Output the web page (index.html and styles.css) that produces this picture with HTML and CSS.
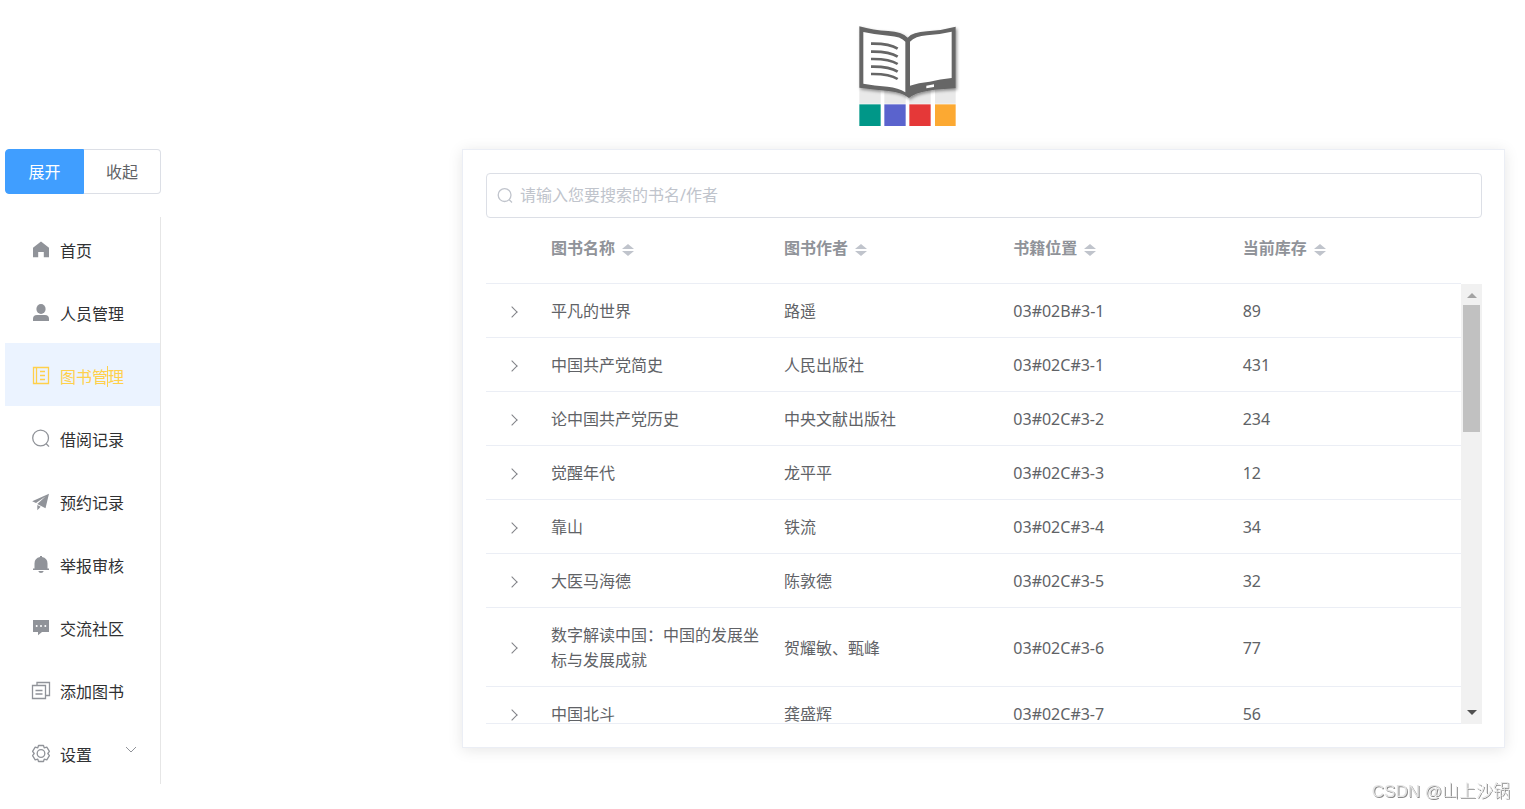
FILE: index.html
```html
<!DOCTYPE html>
<html lang="zh-CN">
<head>
<meta charset="utf-8">
<title>图书管理</title>
<link rel="stylesheet" href="styles.css">
</head>
<body>
<div class="layout">
  <aside class="sidebar">
    <div class="toggle" role="radiogroup" aria-label="菜单">
      <label class="toggle-item"><input type="radio" name="collapse" checked><span>展开</span></label>
      <label class="toggle-item"><input type="radio" name="collapse"><span>收起</span></label>
    </div>
    <nav class="menu">
      <a class="menu-item" href="#">
        <svg class="icon" viewBox="0 0 20 20"><path fill="currentColor" d="M10 1.5 18 7.8V17.3H12.8V12H7.2V17.3H2V7.8Z"/></svg>
        <span class="menu-text">首页</span>
      </a>
      <a class="menu-item" href="#">
        <svg class="icon" viewBox="0 0 20 20"><ellipse fill="currentColor" cx="10" cy="6" rx="4.6" ry="5"/><path fill="currentColor" d="M2 18V15.8Q2 12 6 12H14Q18 12 18 15.8V18Z"/></svg>
        <span class="menu-text">人员管理</span>
      </a>
      <a class="menu-item active" href="#" aria-current="page">
        <svg class="icon" viewBox="0 0 20 20" fill="none" stroke="currentColor"><path d="M2.5 1.5H17.5V17.5H2.5ZM5.5 1.5V17.5M9 5.5H14M9 9.5H14M9 13.5H14" stroke-width="1.3"/></svg>
        <span class="menu-text">图书管理</span>
      </a>
      <a class="menu-item" href="#">
        <svg class="icon" viewBox="0 0 20 20" fill="none" stroke="currentColor" stroke-width="1.3"><circle cx="9.6" cy="9" r="7.9"/><path d="M15 14.5 18 17.6"/></svg>
        <span class="menu-text">借阅记录</span>
      </a>
      <a class="menu-item" href="#">
        <svg class="icon" viewBox="0 0 20 20" fill="currentColor"><path d="M18 1.8 1.2 9.2 5 11 14.5 4.6 6.3 12 14.5 16.2ZM6.3 13V18.3L9.7 14.7Z"/></svg>
        <span class="menu-text">预约记录</span>
      </a>
      <a class="menu-item" href="#">
        <svg class="icon" viewBox="0 0 20 20" fill="currentColor"><path d="M9 2V1H11V2Q16.5 3 16.5 8.5V13.6H18V15H2V13.6H3.5V8.5Q3.5 3 9 2ZM7.3 16H12.7Q12.3 18 10 18 7.7 18 7.3 16Z"/></svg>
        <span class="menu-text">举报审核</span>
      </a>
      <a class="menu-item" href="#">
        <svg class="icon" viewBox="0 0 20 20"><path fill="currentColor" d="M2 2H18V14H11L7 17.2V14H2Z"/><g fill="#fff"><circle cx="5.7" cy="8" r="1"/><circle cx="10" cy="8" r="1"/><circle cx="14.3" cy="8" r="1"/></g></svg>
        <span class="menu-text">交流社区</span>
      </a>
      <a class="menu-item" href="#">
        <svg class="icon" viewBox="0 0 20 20" fill="none" stroke="currentColor" stroke-width="1.3"><path d="M1.5 4.5H14.5V17.5H1.5ZM6 4V1.5H18.5V14.5H15M4.5 9.5H11.5M4.5 13H11.5"/></svg>
        <span class="menu-text">添加图书</span>
      </a>
      <a class="menu-item" href="#">
        <svg class="icon" viewBox="0 0 20 20" fill="none" stroke="currentColor" stroke-width="1.3"><circle cx="10" cy="9.5" r="3.8"/><path d="M7.5 1.5H12.5L13.2 3.8 15.8 3.2 18.4 7.4 16.8 9.5 18.4 11.6 15.8 15.8 13.2 15.2 12.5 17.5H7.5L6.8 15.2 4.2 15.8 1.6 11.6 3.2 9.5 1.6 7.4 4.2 3.2 6.8 3.8Z" stroke-linejoin="round"/></svg>
        <span class="menu-text">设置</span>
        <svg class="chevron" viewBox="0 0 12 8" fill="none" stroke="currentColor"><path d="M1 1 6 6 11 1"/></svg>
      </a>
    </nav>
  </aside>
  <main class="main">
    <header class="brand">
      <svg class="logo" viewBox="48 36 312 318" role="img" aria-label="图书馆">
        <defs><filter id="shade" x="-10%" y="-10%" width="120%" height="125%"><feDropShadow dx="4" dy="5" stdDeviation="4" flood-color="#000" flood-opacity=".4"/></filter></defs>
        <path fill="#e9e9e9" d="M58 230H122V281H58ZM133 230H197V281H133ZM208 230H272V281H208ZM285 230H347V281H285Z"/>
        <path fill="#009788" d="M58 283H122V348H58Z"/>
        <path fill="#5a63cd" d="M133 283H197V348H133Z"/>
        <path fill="#e53838" d="M208 283H272V348H208Z"/>
        <path fill="#fca932" d="M285 283H347V348H285Z"/>
        <path fill="#666" filter="url(#shade)" d="M58 49Q100 61 145 63 186 65 203 83 218 66 261 64 306 61 347 50V235Q300 237 266 242 225 248 207 264 188 247 145 243 100 239 58 233Z"/>
        <path fill="#fff" d="M70 66Q105 74 146 77 183 79 196 95V247Q175 233 143 230 102 227 70 221ZM210 95Q225 79 261 76 300 73 335 65V204Q300 208 269 215 235 218 210 227Z"/>
        <path fill="#fff" d="M259 227 282 223V231L259 235Z"/>
        <g fill="none" stroke="#666" stroke-width="8"><path d="M93 101Q148 100 173 116M93 125Q148 124 173 140M93 147Q148 146 173 162M93 170Q148 169 173 185M93 192Q148 191 173 207"/></g>
      </svg>
    </header>
    <section class="card">
      <div class="search">
        <svg class="search-icon" viewBox="0 0 16 16" fill="none" stroke="currentColor" stroke-width="1.3"><circle cx="7.6" cy="7.1" r="6.4"/><path d="M12 11.5 15 14.5"/></svg>
        <input class="search-input" type="text" aria-label="搜索" placeholder="请输入您要搜索的书名/作者">
      </div>
      <div class="table-head">
        <table class="grid">
          <colgroup><col class="col-expand"><col class="col-name"><col><col><col></colgroup>
          <thead>
            <tr>
              <th></th>
              <th><div class="head-cell">图书名称<span class="sort"></span></div></th>
              <th><div class="head-cell">图书作者<span class="sort"></span></div></th>
              <th><div class="head-cell">书籍位置<span class="sort"></span></div></th>
              <th><div class="head-cell">当前库存<span class="sort"></span></div></th>
            </tr>
          </thead>
        </table>
      </div>
      <div class="table-body">
        <div class="viewport">
          <table class="grid">
            <colgroup><col class="col-expand"><col class="col-name"><col><col><col></colgroup>
            <tbody>
              <tr><td><button class="expand" aria-label="展开行"></button></td><td>平凡的世界</td><td>路遥</td><td>03#02B#3-1</td><td>89</td></tr>
              <tr><td><button class="expand" aria-label="展开行"></button></td><td>中国共产党简史</td><td>人民出版社</td><td>03#02C#3-1</td><td>431</td></tr>
              <tr><td><button class="expand" aria-label="展开行"></button></td><td>论中国共产党历史</td><td>中央文献出版社</td><td>03#02C#3-2</td><td>234</td></tr>
              <tr><td><button class="expand" aria-label="展开行"></button></td><td>觉醒年代</td><td>龙平平</td><td>03#02C#3-3</td><td>12</td></tr>
              <tr><td><button class="expand" aria-label="展开行"></button></td><td>靠山</td><td>铁流</td><td>03#02C#3-4</td><td>34</td></tr>
              <tr><td><button class="expand" aria-label="展开行"></button></td><td>大医马海德</td><td>陈敦德</td><td>03#02C#3-5</td><td>32</td></tr>
              <tr><td><button class="expand" aria-label="展开行"></button></td><td>数字解读中国：中国的发展坐标与发展成就</td><td>贺耀敏、甄峰</td><td>03#02C#3-6</td><td>77</td></tr>
              <tr><td><button class="expand" aria-label="展开行"></button></td><td>中国北斗</td><td>龚盛辉</td><td>03#02C#3-7</td><td>56</td></tr>
            </tbody>
          </table>
        </div>
        <div class="scrollbar" aria-hidden="true">
          <span class="arrow arrow-up"></span>
          <span class="thumb"></span>
          <span class="arrow arrow-down"></span>
        </div>
      </div>
    </section>
  </main>
</div>
<div class="watermark">CSDN @山上沙锅</div>
</body>
</html>
```
FILE: styles.css
```css
* { box-sizing: border-box; }

body {
  margin: 0;
  background: #fff;
  color: #606266;
  font-family: "Noto Sans", "Noto Sans CJK SC", sans-serif;
  font-size: 16px;
  line-height: 25px;
}

.layout {
  display: flex;
  align-items: flex-start;
  gap: 130px;
  padding-left: 5px;
}

.sidebar {
  flex: none;
  width: 156px;
  padding-top: 149px;
}

.toggle {
  display: flex;
  height: 45px;
  margin-bottom: 23px;
}

.toggle-item {
  position: relative;
  flex: 1;
  cursor: pointer;
}

.toggle-item:first-child {
  flex: none;
  width: 79px;
}

.toggle-item input {
  position: absolute;
  inset: 0;
  margin: 0;
  opacity: 0;
}

.toggle-item span {
  display: flex;
  align-items: center;
  justify-content: center;
  height: 100%;
  padding-top: 2px;
  border: 1px solid #dcdfe6;
}

.toggle-item:first-child span { border-radius: 4px 0 0 4px; }
.toggle-item:last-child span { border-left: 0; border-radius: 0 4px 4px 0; }

.toggle-item input:checked + span {
  border-color: #409eff;
  background: #409eff;
  color: #fff;
}

.menu { border-right: 1px solid #e6e6e6; }

.menu-item {
  display: flex;
  align-items: center;
  gap: 9px;
  height: 63px;
  padding: 3px 23px 0 26px;
  color: #303133;
  text-decoration: none;
}

.menu-item.active { background: #ebf3ff; }
.menu-item.active, .active .icon { color: #ffd04b; }

.menu-text {
  position: relative;
  padding-top: 2px;
}

.active .menu-text::after {
  content: "";
  position: absolute;
  top: 3px;
  left: 47px;
  width: 1px;
  height: 21px;
  background: #ffd04b;
}

.icon {
  flex: none;
  width: 20px;
  height: 20px;
  color: #909399;
}

.chevron {
  width: 12px;
  height: 8px;
  margin-left: auto;
  margin-bottom: 8px;
  color: #909399;
}

.main {
  flex: 1;
  min-width: 0;
}

.brand {
  display: flex;
  justify-content: center;
  padding: 22px 0 21px;
}

.logo {
  width: 104px;
  height: 106px;
}

.card {
  margin: 0 20px 0 171px;
  padding: 23px 22px 23px 23px;
  border: 1px solid #ebeef5;
  background: #fff;
  box-shadow: 0 2px 14px rgba(0, 0, 0, 0.1);
}

.search {
  display: flex;
  align-items: center;
  gap: 7px;
  height: 45px;
  padding: 0 10px;
  border: 1px solid #dcdfe6;
  border-radius: 4px;
}

.search-icon {
  flex: none;
  width: 16px;
  height: 16px;
  color: #c0c4cc;
}

.search-input {
  flex: 1;
  min-width: 0;
  height: 40px;
  padding: 0 0 2px;
  border: 0;
  outline: 0;
  background: none;
  color: #606266;
  font: inherit;
}

.search-input::placeholder { color: #c0c4cc; }

.grid {
  width: 100%;
  border-collapse: separate;
  border-spacing: 0;
  table-layout: fixed;
}

.col-expand { width: 54px; }
.col-name { width: 233px; }

.grid th, .grid td {
  padding: 15px 11px 13px;
  border-bottom: 1px solid #ebeef5;
  text-align: left;
}

.grid th {
  padding: 18px 11px 22px;
  color: #909399;
  font-weight: 700;
}

.grid td:first-child {
  padding-left: 0;
  padding-right: 0;
}

.table-head { padding-right: 21px; }

.head-cell {
  display: flex;
  align-items: center;
  gap: 7px;
}

.sort {
  display: flex;
  flex-direction: column;
  gap: 2px;
  padding-top: 2px;
}

.sort::before, .sort::after {
  content: "";
  border: 6px solid transparent;
}

.sort::before { border-top-width: 0; border-bottom-color: #c0c4cc; border-bottom-width: 5px; }
.sort::after { border-bottom-width: 0; border-top-color: #c0c4cc; border-top-width: 5px; }

.expand {
  display: block;
  width: 8px;
  height: 8px;
  margin: 0 0 0 22px;
  padding: 0;
  border: solid #808287;
  border-width: 1px 1px 0 0;
  background: none;
  transform: rotate(45deg);
}

.table-body {
  display: flex;
  height: 440px;
}

.viewport {
  flex: 1;
  min-width: 0;
  overflow: hidden;
  border-bottom: 1px solid #ebeef5;
}

.scrollbar {
  display: flex;
  flex-direction: column;
  align-items: center;
  width: 21px;
  padding: 9px 0;
  background: #f1f1f1;
}

.thumb {
  width: 17px;
  height: 127px;
  margin-top: 7px;
  background: #c1c1c1;
}

.arrow { border: 5px solid transparent; }
.arrow-up { border-top-width: 0; border-bottom-color: #a3a3a3; }
.arrow-down { margin-top: auto; border-bottom-width: 0; border-top-color: #505050; }

.watermark {
  position: fixed;
  right: 15px;
  bottom: 5px;
  color: #e4e4e4;
  font-family: "Liberation Sans", "Noto Sans CJK SC", sans-serif;
  font-size: 17px;
  font-weight: 300;
  text-shadow: 1px 1px 0 #8a8a8a;
}
```
